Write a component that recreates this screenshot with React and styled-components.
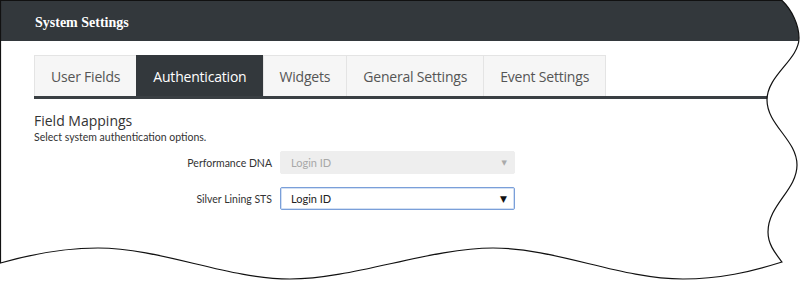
import React from 'react';
import styled, { createGlobalStyle } from 'styled-components';

const GlobalStyle = createGlobalStyle`
  html, body {
    margin: 0;
    padding: 0;
    background: #ffffff;
  }
`;

const tabs = ['User Fields', 'Authentication', 'Widgets', 'General Settings', 'Event Settings'];

const mappings = [
  { label: 'Performance DNA', value: 'Login ID', disabled: true },
  { label: 'Silver Lining STS', value: 'Login ID', disabled: false },
];

// torn-paper outline of the captured region
const EDGE =
  'M0.5,0.5 L782,0.5 C792,10 799,25 799,38 C799,60 767,75 767,100 ' +
  'C767,125 797,140 797,165 C797,190 768,205 768,232 C768,245 776,254 782,262 ' +
  'C750,272 720,279 683,279 C620,279 556,248 493,248 C430,248 353,279 290,279 ' +
  'C227,279 161,248 98,248 C60,248 25,256 0.5,263 Z';

const App = () => {
  return (
    <Stage>
      <GlobalStyle />
      <Page>
        <Header>
          <HeaderTitle>System Settings</HeaderTitle>
        </Header>
        <Body>
          <TabBar>
            {tabs.map((tab) => (
              <Tab key={tab} active={tab === 'Authentication'}>
                {tab}
              </Tab>
            ))}
          </TabBar>
          <Section>
            <SectionTitle>Field Mappings</SectionTitle>
            <SectionHint>Select system authentication options.</SectionHint>
            <Form>
              {mappings.map(({ label, value, disabled }) => (
                <Row key={label}>
                  <Label>{label}</Label>
                  <SelectWrap>
                    <Select disabled={disabled} defaultValue={value}>
                      <option>{value}</option>
                    </Select>
                    <Arrow disabled={disabled}>▼</Arrow>
                  </SelectWrap>
                </Row>
              ))}
            </Form>
          </Section>
        </Body>
      </Page>
      <Edge viewBox="0 0 800 281" width="800" height="281">
        <path d={`M0,0 H800 V281 H0 Z ${EDGE}`} fill="#ffffff" fillRule="evenodd" />
        <path d={EDGE} fill="none" stroke="#111111" strokeWidth="1.2" />
      </Edge>
    </Stage>
  );
};

const Stage = styled.div`
  position: relative;
  width: 800px;
  height: 281px;
  overflow: hidden;
  background: #ffffff;
`;

const Page = styled.div`
  width: 800px;
  height: 281px;
  display: flex;
  flex-direction: column;
  border-top: 1px solid #c9c9c9;
  box-sizing: border-box;
`;

const Header = styled.div`
  height: 40px;
  display: flex;
  align-items: center;
  padding-left: 35px;
  background: #33383c;
`;

const HeaderTitle = styled.div`
  font-family: 'Liberation Serif', serif;
  font-weight: bold;
  font-size: 14px;
  color: #ffffff;
  margin-top: 3px;
`;

const Body = styled.div`
  padding: 14px 0 0 34px;
  display: flex;
  flex-direction: column;
`;

const TabBar = styled.div`
  display: flex;
  border-bottom: 3px solid #3a3f43;
`;

const Tab = styled.div`
  height: 41px;
  box-sizing: border-box;
  padding: 0 16px;
  display: flex;
  align-items: center;
  font-family: 'Open Sans', sans-serif;
  font-size: 14px;
  letter-spacing: -0.2px;
  color: ${({ active }) => (active ? '#ffffff' : '#555555')};
  background: ${({ active }) => (active ? '#33383c' : '#f6f6f6')};
  border: 1px solid ${({ active }) => (active ? '#33383c' : '#e4e4e4')};
  border-bottom: none;
  margin-right: -1px;
`;

const Section = styled.div`
  padding-top: 13px;
  display: flex;
  flex-direction: column;
`;

const SectionTitle = styled.div`
  font-family: 'Open Sans', sans-serif;
  font-size: 14px;
  line-height: 18px;
  color: #333333;
`;

const SectionHint = styled.div`
  font-family: Lato, sans-serif;
  font-size: 10.5px;
  line-height: 14px;
  color: #333333;
`;

const Form = styled.div`
  display: flex;
  flex-direction: column;
  gap: 13px;
  margin-top: 7px;
`;

const Row = styled.div`
  display: flex;
  align-items: center;
  gap: 8px;
`;

const Label = styled.div`
  width: 238px;
  text-align: right;
  font-family: Lato, sans-serif;
  font-size: 10.5px;
  color: #333333;
`;

const SelectWrap = styled.div`
  position: relative;
  width: 235px;
  height: 23px;
`;

const Select = styled.select`
  appearance: none;
  width: 100%;
  height: 100%;
  box-sizing: border-box;
  padding: 0 0 0 10px;
  font-family: Lato, sans-serif;
  font-size: 11px;
  border-radius: 2px;
  outline: none;
  color: #222222;
  background: #ffffff;
  border: 1px solid #7a9fd9;
  box-shadow: inset 0 0 0 1px #d3e0f3;

  &:disabled {
    color: #a8a8a8;
    background: #eeeeee;
    border-color: #eeeeee;
    box-shadow: none;
    opacity: 1;
  }
`;

const Arrow = styled.span`
  position: absolute;
  right: 8px;
  top: 50%;
  transform: translateY(-50%);
  font-family: 'DejaVu Sans', sans-serif;
  font-size: ${({ disabled }) => (disabled ? '7px' : '9px')};
  color: ${({ disabled }) => (disabled ? '#aaaaaa' : '#111111')};
  pointer-events: none;
`;

const Edge = styled.svg`
  position: absolute;
  top: 0;
  left: 0;
  pointer-events: none;
`;

export default App;
